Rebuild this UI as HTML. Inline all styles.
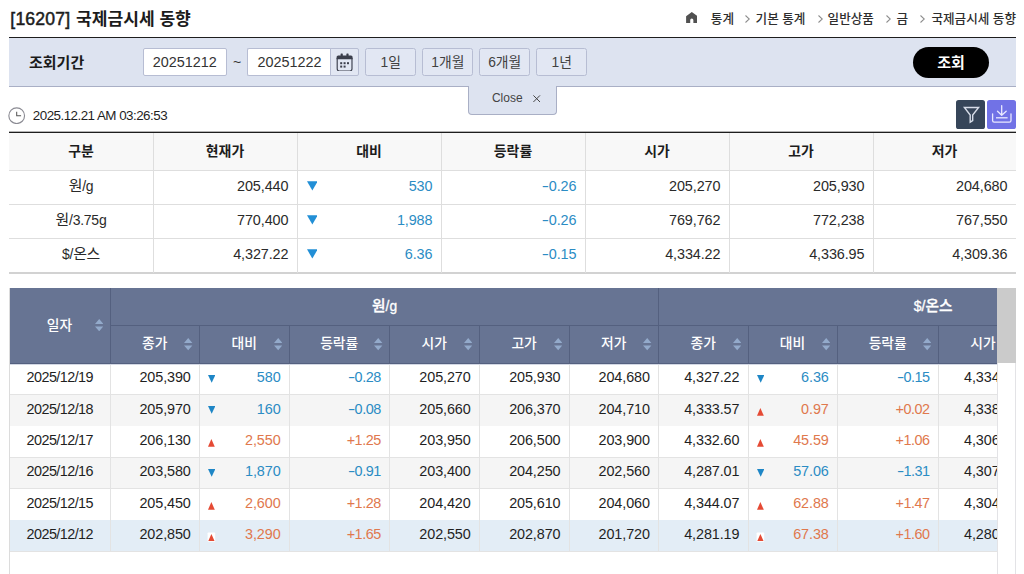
<!DOCTYPE html>
<html lang="ko"><head><meta charset="utf-8"><title>[16207] 국제금시세 동향</title>
<style>
html,body{margin:0;padding:0;background:#fff;}
body{width:1024px;height:574px;overflow:hidden;position:relative;font-family:"Liberation Sans","Noto Sans CJK KR",sans-serif;font-size:13px;color:#222;}
body div,body>svg,.clip>svg{position:absolute;white-space:nowrap;}
i.mn{font-style:normal;display:inline-block;transform:scaleX(1.5);margin:0 1.2px 0 1.4px;}
.kb{font-weight:700;}
.km{font-weight:500;}
.kr{font-weight:400;}
</style></head><body>
<div style="left:10.3px;top:8.3px;width:400px;height:22px;line-height:22px;font-size:17.6px;color:#1c1c1c;"><span style="-webkit-text-stroke:0.5px #1c1c1c;letter-spacing:0.2px">[16207]</span><span class="kb" style="margin-left:5.6px;font-size:17.1px;">국제금시세 동향</span></div>
<svg style="left:685.6px;top:12.4px;width:11.6px;height:11px" viewBox="0 0 116 112"><path fill="#515151" d="M58 0 L116 42 V112 H74 V82 Q74 66 58 66 Q42 66 42 82 V112 H0 V42 Z"/></svg>
<div style="left:710.8px;top:8px;width:200px;height:22px;line-height:22px;font-size:12.6px;color:#2e2e2e;"><span class="km">통계</span></div>
<svg style="left:744.5px;top:14.8px;width:5px;height:8px" viewBox="0 0 5 8"><path d="M0.5 0.5 L4.3 4 L0.5 7.5" fill="none" stroke="#8c8c8c" stroke-width="1.05"/></svg>
<div style="left:755.6px;top:8px;width:200px;height:22px;line-height:22px;font-size:12.6px;color:#2e2e2e;"><span class="km">기본 통계</span></div>
<svg style="left:817.5px;top:14.8px;width:5px;height:8px" viewBox="0 0 5 8"><path d="M0.5 0.5 L4.3 4 L0.5 7.5" fill="none" stroke="#8c8c8c" stroke-width="1.05"/></svg>
<div style="left:827.6px;top:8px;width:200px;height:22px;line-height:22px;font-size:12.6px;color:#2e2e2e;"><span class="km">일반상품</span></div>
<svg style="left:886px;top:14.8px;width:5px;height:8px" viewBox="0 0 5 8"><path d="M0.5 0.5 L4.3 4 L0.5 7.5" fill="none" stroke="#8c8c8c" stroke-width="1.05"/></svg>
<div style="left:896.6px;top:8px;width:200px;height:22px;line-height:22px;font-size:12.6px;color:#2e2e2e;"><span class="km">금</span></div>
<svg style="left:920.3px;top:14.8px;width:5px;height:8px" viewBox="0 0 5 8"><path d="M0.5 0.5 L4.3 4 L0.5 7.5" fill="none" stroke="#8c8c8c" stroke-width="1.05"/></svg>
<div style="left:931.4px;top:8px;width:200px;height:22px;line-height:22px;font-size:12.6px;color:#2e2e2e;"><span class="km">국제금시세 동향</span></div>
<div style="left:9px;top:36.5px;width:1007px;height:50px;background:#dde3f0;border-top:1px solid #1e1e1e;border-bottom:1px solid #a9afc5;box-sizing:border-box;"></div>
<div style="left:29px;top:49.4px;width:80px;height:28px;line-height:28px;font-size:15px;color:#1a1a1a;"><span class="kb">조회기간</span></div>
<div style="left:143px;top:48px;width:83.5px;height:28px;line-height:28px;background:#fff;border:1px solid #b7bdd3;box-sizing:border-box;text-align:center;font-size:14.4px;color:#333;border-radius:2px;line-height:27px;">20251212</div>
<div style="left:229px;top:48px;width:16px;height:28px;line-height:28px;text-align:center;font-size:14px;color:#333;">~</div>
<div style="left:247px;top:48px;width:84px;height:28px;line-height:28px;background:#fff;border:1px solid #b7bdd3;border-right:none;box-sizing:border-box;text-align:center;font-size:14.4px;color:#333;border-radius:2px 0 0 2px;line-height:27px;">20251222</div>
<div style="left:330.3px;top:48px;width:28.4px;height:28px;background:#e2e7f3;border:1px solid #b7bdd3;box-sizing:border-box;border-radius:0 2px 2px 0;"></div>
<svg style="left:336.4px;top:52.6px;width:17.2px;height:18.8px" viewBox="0 0 172 188">
<g fill="#3b3f4c"><rect x="46" y="4" width="22" height="40" rx="6"/><rect x="104" y="4" width="22" height="40" rx="6"/>
<path d="M22 24 H150 Q166 24 166 40 V62 H6 V40 Q6 24 22 24Z"/>
<rect x="42" y="92" width="20" height="20"/><rect x="76" y="92" width="20" height="20"/><rect x="110" y="92" width="20" height="20"/>
<rect x="42" y="126" width="20" height="20"/><rect x="76" y="126" width="20" height="20"/></g>
<path d="M12 50 V158 Q12 180 34 180 H138 Q160 180 160 158 V50" fill="none" stroke="#3b3f4c" stroke-width="11.5"/></svg>
<div style="left:365.2px;top:48px;width:51px;height:28px;line-height:28px;background:#e2e7f3;border:1px solid #b7bdd3;box-sizing:border-box;border-radius:2.5px;text-align:center;font-size:13.8px;color:#404040;line-height:28px;">1<span class="kr">일</span></div>
<div style="left:422.4px;top:48px;width:51px;height:28px;line-height:28px;background:#e2e7f3;border:1px solid #b7bdd3;box-sizing:border-box;border-radius:2.5px;text-align:center;font-size:13.8px;color:#404040;line-height:28px;">1<span class="kr">개월</span></div>
<div style="left:479.2px;top:48px;width:51px;height:28px;line-height:28px;background:#e2e7f3;border:1px solid #b7bdd3;box-sizing:border-box;border-radius:2.5px;text-align:center;font-size:13.8px;color:#404040;line-height:28px;">6<span class="kr">개월</span></div>
<div style="left:536.3px;top:48px;width:51px;height:28px;line-height:28px;background:#e2e7f3;border:1px solid #b7bdd3;box-sizing:border-box;border-radius:2.5px;text-align:center;font-size:13.8px;color:#404040;line-height:28px;">1<span class="kr">년</span></div>
<div style="left:912.6px;top:47px;width:76.8px;height:31.4px;line-height:31.4px;background:#000;border-radius:16px;text-align:center;color:#fff;font-size:15px;"><span class="kb">조회</span></div>
<div style="left:468.3px;top:85.6px;width:89.1px;height:29.8px;line-height:29.8px;background:#dde3f0;border:1px solid #a9afc5;border-top:none;box-sizing:border-box;border-radius:0 0 4px 4px;text-align:left;padding-left:22.6px;font-size:12px;color:#444;line-height:25px;">Close</div>
<svg style="left:533.2px;top:94.6px;width:7.4px;height:7.4px" viewBox="0 0 7.4 7.4"><path d="M0.4 0.4L7 7M7 0.4L0.4 7" stroke="#444" stroke-width="1" fill="none"/></svg>
<svg style="left:8.2px;top:106.8px;width:17.4px;height:17.4px" viewBox="0 0 186 186">
<circle cx="93" cy="93" r="84" fill="#fff" stroke="#8b8b93" stroke-width="12"/>
<path d="M93 52 V93 H140" fill="none" stroke="#555" stroke-width="11"/></svg>
<div style="left:32.8px;top:105px;width:200px;height:22px;line-height:22px;font-size:13.4px;letter-spacing:-0.53px;color:#1f1f1f;">2025.12.21 AM 03:26:53</div>
<div style="left:955.9px;top:99.6px;width:28.9px;height:29px;background:#364559;border-radius:2.6px;"></div>
<svg style="left:955.9px;top:99.6px;width:28.9px;height:29px" viewBox="0 0 289 290">
<path d="M84 75 H226 L167 150 V205 L142 221 V150 Z" fill="none" stroke="#d6dce8" stroke-width="14" stroke-linejoin="miter"/></svg>
<div style="left:987.1px;top:99.6px;width:28.9px;height:29px;background:#7172e6;border-radius:2.6px;"></div>
<svg style="left:987.1px;top:99.6px;width:28.9px;height:29px" viewBox="0 0 289 290">
<g fill="none" stroke="#e9e9ff" stroke-width="13" stroke-linecap="round" stroke-linejoin="round">
<path d="M147 56 V150 M105 112 L147 152 L192 112"/><path d="M90 178 H206" stroke-linecap="butt"/>
<path d="M56 138 V206 Q56 222 72 222 H224 Q240 222 240 206 V138"/></g></svg>
<div style="left:9px;top:132.5px;width:1007px;height:38.2px;background:#f8f8f8;"></div>
<div style="left:9px;top:131px;width:1007px;height:1px;background:#b4b4b4;"></div>
<div style="left:9px;top:132px;width:1007px;height:1px;background:#1e1e1e;"></div>
<div style="left:9px;top:170.2px;width:1007px;height:1px;background:#dedede;"></div>
<div style="left:9px;top:204.1px;width:1007px;height:1px;background:#dedede;"></div>
<div style="left:9px;top:238.1px;width:1007px;height:1px;background:#dedede;"></div>
<div style="left:9px;top:271.6px;width:1007px;height:2px;background:#d2d2d2;"></div>
<div style="left:152.5px;top:133.2px;width:1px;height:139.4px;background:#dedede;"></div>
<div style="left:296.5px;top:133.2px;width:1px;height:139.4px;background:#dedede;"></div>
<div style="left:440.5px;top:133.2px;width:1px;height:139.4px;background:#dedede;"></div>
<div style="left:584.5px;top:133.2px;width:1px;height:139.4px;background:#dedede;"></div>
<div style="left:728.5px;top:133.2px;width:1px;height:139.4px;background:#dedede;"></div>
<div style="left:872.5px;top:133.2px;width:1px;height:139.4px;background:#dedede;"></div>
<div style="left:9px;top:131.8px;width:144px;height:38.2px;line-height:38.2px;text-align:center;font-size:13.9px;color:#1c1c1c;"><span class="kb">구분</span></div>
<div style="left:153px;top:131.8px;width:144px;height:38.2px;line-height:38.2px;text-align:center;font-size:13.9px;color:#1c1c1c;"><span class="kb">현재가</span></div>
<div style="left:297px;top:131.8px;width:144px;height:38.2px;line-height:38.2px;text-align:center;font-size:13.9px;color:#1c1c1c;"><span class="kb">대비</span></div>
<div style="left:441px;top:131.8px;width:144px;height:38.2px;line-height:38.2px;text-align:center;font-size:13.9px;color:#1c1c1c;"><span class="kb">등락률</span></div>
<div style="left:585px;top:131.8px;width:144px;height:38.2px;line-height:38.2px;text-align:center;font-size:13.9px;color:#1c1c1c;"><span class="kb">시가</span></div>
<div style="left:729px;top:131.8px;width:144px;height:38.2px;line-height:38.2px;text-align:center;font-size:13.9px;color:#1c1c1c;"><span class="kb">고가</span></div>
<div style="left:873px;top:131.8px;width:143px;height:38.2px;line-height:38.2px;text-align:center;font-size:13.9px;color:#1c1c1c;"><span class="kb">저가</span></div>
<div style="left:9px;top:169.5px;width:144px;height:33.9px;line-height:33.9px;text-align:center;font-size:14.4px;letter-spacing:-0.1px;color:#2a2a2a;font-size:14px;letter-spacing:-0.25px"><span class="kr" style="font-size:14.9px;">원</span>/g</div>
<div style="left:153px;top:169.5px;width:135.4px;height:33.9px;line-height:33.9px;text-align:right;font-size:14.4px;letter-spacing:-0.1px;color:#2a2a2a;">205,440</div>
<div style="left:297px;top:169.5px;width:135.4px;height:33.9px;line-height:33.9px;text-align:right;font-size:14.4px;letter-spacing:-0.1px;color:#2b8cc4;">530</div>
<svg style="left:306.5px;top:181.45px;width:10.7px;height:9.9px" viewBox="0 0 12 10.4"><path d="M0 0H12L6 10.4Z" fill="#228fd6"/></svg>
<div style="left:441px;top:169.5px;width:135.4px;height:33.9px;line-height:33.9px;text-align:right;font-size:14.4px;letter-spacing:-0.1px;color:#2b8cc4;"><i class="mn">-</i>0.26</div>
<div style="left:585px;top:169.5px;width:135.4px;height:33.9px;line-height:33.9px;text-align:right;font-size:14.4px;letter-spacing:-0.1px;color:#2a2a2a;">205,270</div>
<div style="left:729px;top:169.5px;width:135.4px;height:33.9px;line-height:33.9px;text-align:right;font-size:14.4px;letter-spacing:-0.1px;color:#2a2a2a;">205,930</div>
<div style="left:873px;top:169.5px;width:134.4px;height:33.9px;line-height:33.9px;text-align:right;font-size:14.4px;letter-spacing:-0.1px;color:#2a2a2a;">204,680</div>
<div style="left:9px;top:203.4px;width:144px;height:34px;line-height:34px;text-align:center;font-size:14.4px;letter-spacing:-0.1px;color:#2a2a2a;font-size:14px;letter-spacing:-0.25px"><span class="kr" style="font-size:14.9px;">원</span>/3.75g</div>
<div style="left:153px;top:203.4px;width:135.4px;height:34px;line-height:34px;text-align:right;font-size:14.4px;letter-spacing:-0.1px;color:#2a2a2a;">770,400</div>
<div style="left:297px;top:203.4px;width:135.4px;height:34px;line-height:34px;text-align:right;font-size:14.4px;letter-spacing:-0.1px;color:#2b8cc4;">1,988</div>
<svg style="left:306.5px;top:215.4px;width:10.7px;height:9.9px" viewBox="0 0 12 10.4"><path d="M0 0H12L6 10.4Z" fill="#228fd6"/></svg>
<div style="left:441px;top:203.4px;width:135.4px;height:34px;line-height:34px;text-align:right;font-size:14.4px;letter-spacing:-0.1px;color:#2b8cc4;"><i class="mn">-</i>0.26</div>
<div style="left:585px;top:203.4px;width:135.4px;height:34px;line-height:34px;text-align:right;font-size:14.4px;letter-spacing:-0.1px;color:#2a2a2a;">769,762</div>
<div style="left:729px;top:203.4px;width:135.4px;height:34px;line-height:34px;text-align:right;font-size:14.4px;letter-spacing:-0.1px;color:#2a2a2a;">772,238</div>
<div style="left:873px;top:203.4px;width:134.4px;height:34px;line-height:34px;text-align:right;font-size:14.4px;letter-spacing:-0.1px;color:#2a2a2a;">767,550</div>
<div style="left:9px;top:237.4px;width:144px;height:34px;line-height:34px;text-align:center;font-size:14.4px;letter-spacing:-0.1px;color:#2a2a2a;font-size:14px;letter-spacing:-0.25px">$/<span class="kr" style="font-size:14.9px;">온스</span></div>
<div style="left:153px;top:237.4px;width:135.4px;height:34px;line-height:34px;text-align:right;font-size:14.4px;letter-spacing:-0.1px;color:#2a2a2a;">4,327.22</div>
<div style="left:297px;top:237.4px;width:135.4px;height:34px;line-height:34px;text-align:right;font-size:14.4px;letter-spacing:-0.1px;color:#2b8cc4;">6.36</div>
<svg style="left:306.5px;top:249.4px;width:10.7px;height:9.9px" viewBox="0 0 12 10.4"><path d="M0 0H12L6 10.4Z" fill="#228fd6"/></svg>
<div style="left:441px;top:237.4px;width:135.4px;height:34px;line-height:34px;text-align:right;font-size:14.4px;letter-spacing:-0.1px;color:#2b8cc4;"><i class="mn">-</i>0.15</div>
<div style="left:585px;top:237.4px;width:135.4px;height:34px;line-height:34px;text-align:right;font-size:14.4px;letter-spacing:-0.1px;color:#2a2a2a;">4,334.22</div>
<div style="left:729px;top:237.4px;width:135.4px;height:34px;line-height:34px;text-align:right;font-size:14.4px;letter-spacing:-0.1px;color:#2a2a2a;">4,336.95</div>
<div style="left:873px;top:237.4px;width:134.4px;height:34px;line-height:34px;text-align:right;font-size:14.4px;letter-spacing:-0.1px;color:#2a2a2a;">4,309.36</div>
<div class="clip" style="left:0;top:0;width:997.4px;height:574px;overflow:hidden">
<div style="left:9.8px;top:288.1px;width:1300px;height:75.3px;background:#677493;"></div>
<div style="left:110.4px;top:324.9px;width:1300px;height:1px;background:#54607f;"></div>
<div style="left:109.9px;top:288.1px;width:1px;height:75.3px;background:#54607f;"></div>
<div style="left:658.3px;top:288.1px;width:1px;height:75.3px;background:#54607f;"></div>
<div style="left:199.2px;top:325.4px;width:1px;height:38px;background:#54607f;"></div>
<div style="left:289px;top:325.4px;width:1px;height:38px;background:#54607f;"></div>
<div style="left:389.2px;top:325.4px;width:1px;height:38px;background:#54607f;"></div>
<div style="left:479.1px;top:325.4px;width:1px;height:38px;background:#54607f;"></div>
<div style="left:568.9px;top:325.4px;width:1px;height:38px;background:#54607f;"></div>
<div style="left:747.8px;top:325.4px;width:1px;height:38px;background:#54607f;"></div>
<div style="left:837.1px;top:325.4px;width:1px;height:38px;background:#54607f;"></div>
<div style="left:938.1px;top:325.4px;width:1px;height:38px;background:#54607f;"></div>
<div style="left:1027.7px;top:325.4px;width:1px;height:38px;background:#54607f;"></div>
<div style="left:9.1px;top:287.6px;width:100.6px;height:75.3px;line-height:75.3px;text-align:center;font-size:13.8px;color:#fff;"><span class="km">일자</span></div>
<svg style="left:94.8px;top:318.95px;width:8.4px;height:12.4px" viewBox="0 0 8.4 12.4"><path d="M0 5H8.4L4.2 0.1Z M0 7.4H8.4L4.2 12.3Z" fill="#93aacb"/></svg>
<div style="left:110.4px;top:288.1px;width:548.4px;height:37.3px;line-height:37.3px;text-align:center;font-size:13.8px;color:#fff;-webkit-text-stroke:0.3px #fff;"><span class="km" style="font-size:14.7px;">원</span>/g</div>
<div style="left:658.8px;top:288.1px;width:548.6px;height:37.3px;line-height:37.3px;text-align:center;font-size:13.8px;color:#fff;font-size:14px;-webkit-text-stroke:0.3px #fff;">$/<span class="km" style="font-size:14.7px;">온스</span></div>
<div style="left:110px;top:324.9px;width:89.3px;height:38px;line-height:38px;text-align:center;font-size:13.8px;color:#fff;"><span class="km">종가</span></div>
<svg style="left:184.2px;top:338.2px;width:8.4px;height:12.4px" viewBox="0 0 8.4 12.4"><path d="M0 5H8.4L4.2 0.1Z M0 7.4H8.4L4.2 12.3Z" fill="#93aacb"/></svg>
<div style="left:199.3px;top:324.9px;width:89.8px;height:38px;line-height:38px;text-align:center;font-size:13.8px;color:#fff;"><span class="km">대비</span></div>
<svg style="left:274px;top:338.2px;width:8.4px;height:12.4px" viewBox="0 0 8.4 12.4"><path d="M0 5H8.4L4.2 0.1Z M0 7.4H8.4L4.2 12.3Z" fill="#93aacb"/></svg>
<div style="left:289.1px;top:324.9px;width:100.2px;height:38px;line-height:38px;text-align:center;font-size:13.8px;color:#fff;"><span class="km">등락률</span></div>
<svg style="left:374.2px;top:338.2px;width:8.4px;height:12.4px" viewBox="0 0 8.4 12.4"><path d="M0 5H8.4L4.2 0.1Z M0 7.4H8.4L4.2 12.3Z" fill="#93aacb"/></svg>
<div style="left:389.3px;top:324.9px;width:89.9px;height:38px;line-height:38px;text-align:center;font-size:13.8px;color:#fff;"><span class="km">시가</span></div>
<svg style="left:464.1px;top:338.2px;width:8.4px;height:12.4px" viewBox="0 0 8.4 12.4"><path d="M0 5H8.4L4.2 0.1Z M0 7.4H8.4L4.2 12.3Z" fill="#93aacb"/></svg>
<div style="left:479.2px;top:324.9px;width:89.8px;height:38px;line-height:38px;text-align:center;font-size:13.8px;color:#fff;"><span class="km">고가</span></div>
<svg style="left:553.9px;top:338.2px;width:8.4px;height:12.4px" viewBox="0 0 8.4 12.4"><path d="M0 5H8.4L4.2 0.1Z M0 7.4H8.4L4.2 12.3Z" fill="#93aacb"/></svg>
<div style="left:569px;top:324.9px;width:89.4px;height:38px;line-height:38px;text-align:center;font-size:13.8px;color:#fff;"><span class="km">저가</span></div>
<svg style="left:643.3px;top:338.2px;width:8.4px;height:12.4px" viewBox="0 0 8.4 12.4"><path d="M0 5H8.4L4.2 0.1Z M0 7.4H8.4L4.2 12.3Z" fill="#93aacb"/></svg>
<div style="left:658.4px;top:324.9px;width:89.5px;height:38px;line-height:38px;text-align:center;font-size:13.8px;color:#fff;"><span class="km">종가</span></div>
<svg style="left:732.8px;top:338.2px;width:8.4px;height:12.4px" viewBox="0 0 8.4 12.4"><path d="M0 5H8.4L4.2 0.1Z M0 7.4H8.4L4.2 12.3Z" fill="#93aacb"/></svg>
<div style="left:747.9px;top:324.9px;width:89.3px;height:38px;line-height:38px;text-align:center;font-size:13.8px;color:#fff;"><span class="km">대비</span></div>
<svg style="left:822.1px;top:338.2px;width:8.4px;height:12.4px" viewBox="0 0 8.4 12.4"><path d="M0 5H8.4L4.2 0.1Z M0 7.4H8.4L4.2 12.3Z" fill="#93aacb"/></svg>
<div style="left:837.2px;top:324.9px;width:101px;height:38px;line-height:38px;text-align:center;font-size:13.8px;color:#fff;"><span class="km">등락률</span></div>
<svg style="left:923.1px;top:338.2px;width:8.4px;height:12.4px" viewBox="0 0 8.4 12.4"><path d="M0 5H8.4L4.2 0.1Z M0 7.4H8.4L4.2 12.3Z" fill="#93aacb"/></svg>
<div style="left:938.2px;top:324.9px;width:89.6px;height:38px;line-height:38px;text-align:center;font-size:13.8px;color:#fff;"><span class="km">시가</span></div>
<svg style="left:1012.7px;top:338.2px;width:8.4px;height:12.4px" viewBox="0 0 8.4 12.4"><path d="M0 5H8.4L4.2 0.1Z M0 7.4H8.4L4.2 12.3Z" fill="#93aacb"/></svg>
<div style="left:9.8px;top:363.4px;width:1300px;height:31.37px;background:#fff;"></div>
<div style="left:9.8px;top:394.27px;width:1300px;height:1px;background:#e3e3e3;"></div>
<div style="left:9.5px;top:362.15px;width:100.6px;height:31.37px;line-height:31.37px;text-align:center;font-size:14.4px;letter-spacing:-0.56px;color:#1f1f1f;">2025/12/19</div>
<div style="left:110.4px;top:362.15px;width:80.4px;height:31.37px;line-height:31.37px;text-align:right;font-size:14.4px;letter-spacing:-0.1px;color:#1f1f1f;">205,390</div>
<div style="left:199.7px;top:362.15px;width:80.9px;height:31.37px;line-height:31.37px;text-align:right;font-size:14.4px;letter-spacing:-0.1px;color:#2b8cc4;">580</div>
<svg style="left:207.9px;top:374.785px;width:7.4px;height:7.8px" viewBox="0 0 7.4 7.8"><path d="M0 0H7.4L3.7 7.8Z" fill="#1e86c6"/></svg>
<div style="left:289.5px;top:362.15px;width:91.3px;height:31.37px;line-height:31.37px;text-align:right;font-size:14.4px;letter-spacing:-0.1px;color:#2b8cc4;letter-spacing:-0.45px;"><i class="mn">-</i>0.28</div>
<div style="left:389.7px;top:362.15px;width:81px;height:31.37px;line-height:31.37px;text-align:right;font-size:14.4px;letter-spacing:-0.1px;color:#1f1f1f;">205,270</div>
<div style="left:479.6px;top:362.15px;width:80.9px;height:31.37px;line-height:31.37px;text-align:right;font-size:14.4px;letter-spacing:-0.1px;color:#1f1f1f;">205,930</div>
<div style="left:569.4px;top:362.15px;width:80.5px;height:31.37px;line-height:31.37px;text-align:right;font-size:14.4px;letter-spacing:-0.1px;color:#1f1f1f;">204,680</div>
<div style="left:658.8px;top:362.15px;width:80.6px;height:31.37px;line-height:31.37px;text-align:right;font-size:14.4px;letter-spacing:-0.1px;color:#1f1f1f;">4,327.22</div>
<div style="left:748.3px;top:362.15px;width:80.4px;height:31.37px;line-height:31.37px;text-align:right;font-size:14.4px;letter-spacing:-0.1px;color:#2b8cc4;">6.36</div>
<svg style="left:756.5px;top:374.785px;width:7.4px;height:7.8px" viewBox="0 0 7.4 7.8"><path d="M0 0H7.4L3.7 7.8Z" fill="#1e86c6"/></svg>
<div style="left:837.6px;top:362.15px;width:92.1px;height:31.37px;line-height:31.37px;text-align:right;font-size:14.4px;letter-spacing:-0.1px;color:#2b8cc4;letter-spacing:-0.45px;"><i class="mn">-</i>0.15</div>
<div style="left:938.6px;top:362.15px;width:80.7px;height:31.37px;line-height:31.37px;text-align:right;font-size:14.4px;letter-spacing:-0.1px;color:#1f1f1f;">4,334.22</div>
<div style="left:9.8px;top:394.77px;width:1300px;height:31.37px;background:#f5f5f5;"></div>
<div style="left:9.8px;top:425.64px;width:1300px;height:1px;background:#e3e3e3;"></div>
<div style="left:9.5px;top:393.52px;width:100.6px;height:31.37px;line-height:31.37px;text-align:center;font-size:14.4px;letter-spacing:-0.56px;color:#1f1f1f;">2025/12/18</div>
<div style="left:110.4px;top:393.52px;width:80.4px;height:31.37px;line-height:31.37px;text-align:right;font-size:14.4px;letter-spacing:-0.1px;color:#1f1f1f;">205,970</div>
<div style="left:199.7px;top:393.52px;width:80.9px;height:31.37px;line-height:31.37px;text-align:right;font-size:14.4px;letter-spacing:-0.1px;color:#2b8cc4;">160</div>
<svg style="left:207.9px;top:406.155px;width:7.4px;height:7.8px" viewBox="0 0 7.4 7.8"><path d="M0 0H7.4L3.7 7.8Z" fill="#1e86c6"/></svg>
<div style="left:289.5px;top:393.52px;width:91.3px;height:31.37px;line-height:31.37px;text-align:right;font-size:14.4px;letter-spacing:-0.1px;color:#2b8cc4;letter-spacing:-0.45px;"><i class="mn">-</i>0.08</div>
<div style="left:389.7px;top:393.52px;width:81px;height:31.37px;line-height:31.37px;text-align:right;font-size:14.4px;letter-spacing:-0.1px;color:#1f1f1f;">205,660</div>
<div style="left:479.6px;top:393.52px;width:80.9px;height:31.37px;line-height:31.37px;text-align:right;font-size:14.4px;letter-spacing:-0.1px;color:#1f1f1f;">206,370</div>
<div style="left:569.4px;top:393.52px;width:80.5px;height:31.37px;line-height:31.37px;text-align:right;font-size:14.4px;letter-spacing:-0.1px;color:#1f1f1f;">204,710</div>
<div style="left:658.8px;top:393.52px;width:80.6px;height:31.37px;line-height:31.37px;text-align:right;font-size:14.4px;letter-spacing:-0.1px;color:#1f1f1f;">4,333.57</div>
<div style="left:748.3px;top:393.52px;width:80.4px;height:31.37px;line-height:31.37px;text-align:right;font-size:14.4px;letter-spacing:-0.1px;color:#e0784d;">0.97</div>
<svg style="left:756.8px;top:408.055px;width:6.8px;height:7.7px" viewBox="0 0 7 7.2" preserveAspectRatio="none"><path d="M0 7.2H7L3.5 0Z" fill="#e54a34"/></svg>
<div style="left:837.6px;top:393.52px;width:92.1px;height:31.37px;line-height:31.37px;text-align:right;font-size:14.4px;letter-spacing:-0.1px;color:#e0784d;letter-spacing:-0.45px;">+0.02</div>
<div style="left:938.6px;top:393.52px;width:80.7px;height:31.37px;line-height:31.37px;text-align:right;font-size:14.4px;letter-spacing:-0.1px;color:#1f1f1f;">4,338.31</div>
<div style="left:9.8px;top:426.14px;width:1300px;height:31.37px;background:#fff;"></div>
<div style="left:9.8px;top:457.01px;width:1300px;height:1px;background:#e3e3e3;"></div>
<div style="left:9.5px;top:424.89px;width:100.6px;height:31.37px;line-height:31.37px;text-align:center;font-size:14.4px;letter-spacing:-0.56px;color:#1f1f1f;">2025/12/17</div>
<div style="left:110.4px;top:424.89px;width:80.4px;height:31.37px;line-height:31.37px;text-align:right;font-size:14.4px;letter-spacing:-0.1px;color:#1f1f1f;">206,130</div>
<div style="left:199.7px;top:424.89px;width:80.9px;height:31.37px;line-height:31.37px;text-align:right;font-size:14.4px;letter-spacing:-0.1px;color:#e0784d;">2,550</div>
<svg style="left:208.2px;top:439.425px;width:6.8px;height:7.7px" viewBox="0 0 7 7.2" preserveAspectRatio="none"><path d="M0 7.2H7L3.5 0Z" fill="#e54a34"/></svg>
<div style="left:289.5px;top:424.89px;width:91.3px;height:31.37px;line-height:31.37px;text-align:right;font-size:14.4px;letter-spacing:-0.1px;color:#e0784d;letter-spacing:-0.45px;">+1.25</div>
<div style="left:389.7px;top:424.89px;width:81px;height:31.37px;line-height:31.37px;text-align:right;font-size:14.4px;letter-spacing:-0.1px;color:#1f1f1f;">203,950</div>
<div style="left:479.6px;top:424.89px;width:80.9px;height:31.37px;line-height:31.37px;text-align:right;font-size:14.4px;letter-spacing:-0.1px;color:#1f1f1f;">206,500</div>
<div style="left:569.4px;top:424.89px;width:80.5px;height:31.37px;line-height:31.37px;text-align:right;font-size:14.4px;letter-spacing:-0.1px;color:#1f1f1f;">203,900</div>
<div style="left:658.8px;top:424.89px;width:80.6px;height:31.37px;line-height:31.37px;text-align:right;font-size:14.4px;letter-spacing:-0.1px;color:#1f1f1f;">4,332.60</div>
<div style="left:748.3px;top:424.89px;width:80.4px;height:31.37px;line-height:31.37px;text-align:right;font-size:14.4px;letter-spacing:-0.1px;color:#e0784d;">45.59</div>
<svg style="left:756.8px;top:439.425px;width:6.8px;height:7.7px" viewBox="0 0 7 7.2" preserveAspectRatio="none"><path d="M0 7.2H7L3.5 0Z" fill="#e54a34"/></svg>
<div style="left:837.6px;top:424.89px;width:92.1px;height:31.37px;line-height:31.37px;text-align:right;font-size:14.4px;letter-spacing:-0.1px;color:#e0784d;letter-spacing:-0.45px;">+1.06</div>
<div style="left:938.6px;top:424.89px;width:80.7px;height:31.37px;line-height:31.37px;text-align:right;font-size:14.4px;letter-spacing:-0.1px;color:#1f1f1f;">4,306.01</div>
<div style="left:9.8px;top:457.51px;width:1300px;height:31.37px;background:#f5f5f5;"></div>
<div style="left:9.8px;top:488.38px;width:1300px;height:1px;background:#e3e3e3;"></div>
<div style="left:9.5px;top:456.26px;width:100.6px;height:31.37px;line-height:31.37px;text-align:center;font-size:14.4px;letter-spacing:-0.56px;color:#1f1f1f;">2025/12/16</div>
<div style="left:110.4px;top:456.26px;width:80.4px;height:31.37px;line-height:31.37px;text-align:right;font-size:14.4px;letter-spacing:-0.1px;color:#1f1f1f;">203,580</div>
<div style="left:199.7px;top:456.26px;width:80.9px;height:31.37px;line-height:31.37px;text-align:right;font-size:14.4px;letter-spacing:-0.1px;color:#2b8cc4;">1,870</div>
<svg style="left:207.9px;top:468.895px;width:7.4px;height:7.8px" viewBox="0 0 7.4 7.8"><path d="M0 0H7.4L3.7 7.8Z" fill="#1e86c6"/></svg>
<div style="left:289.5px;top:456.26px;width:91.3px;height:31.37px;line-height:31.37px;text-align:right;font-size:14.4px;letter-spacing:-0.1px;color:#2b8cc4;letter-spacing:-0.45px;"><i class="mn">-</i>0.91</div>
<div style="left:389.7px;top:456.26px;width:81px;height:31.37px;line-height:31.37px;text-align:right;font-size:14.4px;letter-spacing:-0.1px;color:#1f1f1f;">203,400</div>
<div style="left:479.6px;top:456.26px;width:80.9px;height:31.37px;line-height:31.37px;text-align:right;font-size:14.4px;letter-spacing:-0.1px;color:#1f1f1f;">204,250</div>
<div style="left:569.4px;top:456.26px;width:80.5px;height:31.37px;line-height:31.37px;text-align:right;font-size:14.4px;letter-spacing:-0.1px;color:#1f1f1f;">202,560</div>
<div style="left:658.8px;top:456.26px;width:80.6px;height:31.37px;line-height:31.37px;text-align:right;font-size:14.4px;letter-spacing:-0.1px;color:#1f1f1f;">4,287.01</div>
<div style="left:748.3px;top:456.26px;width:80.4px;height:31.37px;line-height:31.37px;text-align:right;font-size:14.4px;letter-spacing:-0.1px;color:#2b8cc4;">57.06</div>
<svg style="left:756.5px;top:468.895px;width:7.4px;height:7.8px" viewBox="0 0 7.4 7.8"><path d="M0 0H7.4L3.7 7.8Z" fill="#1e86c6"/></svg>
<div style="left:837.6px;top:456.26px;width:92.1px;height:31.37px;line-height:31.37px;text-align:right;font-size:14.4px;letter-spacing:-0.1px;color:#2b8cc4;letter-spacing:-0.45px;"><i class="mn">-</i>1.31</div>
<div style="left:938.6px;top:456.26px;width:80.7px;height:31.37px;line-height:31.37px;text-align:right;font-size:14.4px;letter-spacing:-0.1px;color:#1f1f1f;">4,307.68</div>
<div style="left:9.8px;top:488.88px;width:1300px;height:31.37px;background:#fff;"></div>
<div style="left:9.8px;top:519.75px;width:1300px;height:1px;background:#e3e3e3;"></div>
<div style="left:9.5px;top:487.63px;width:100.6px;height:31.37px;line-height:31.37px;text-align:center;font-size:14.4px;letter-spacing:-0.56px;color:#1f1f1f;">2025/12/15</div>
<div style="left:110.4px;top:487.63px;width:80.4px;height:31.37px;line-height:31.37px;text-align:right;font-size:14.4px;letter-spacing:-0.1px;color:#1f1f1f;">205,450</div>
<div style="left:199.7px;top:487.63px;width:80.9px;height:31.37px;line-height:31.37px;text-align:right;font-size:14.4px;letter-spacing:-0.1px;color:#e0784d;">2,600</div>
<svg style="left:208.2px;top:502.165px;width:6.8px;height:7.7px" viewBox="0 0 7 7.2" preserveAspectRatio="none"><path d="M0 7.2H7L3.5 0Z" fill="#e54a34"/></svg>
<div style="left:289.5px;top:487.63px;width:91.3px;height:31.37px;line-height:31.37px;text-align:right;font-size:14.4px;letter-spacing:-0.1px;color:#e0784d;letter-spacing:-0.45px;">+1.28</div>
<div style="left:389.7px;top:487.63px;width:81px;height:31.37px;line-height:31.37px;text-align:right;font-size:14.4px;letter-spacing:-0.1px;color:#1f1f1f;">204,420</div>
<div style="left:479.6px;top:487.63px;width:80.9px;height:31.37px;line-height:31.37px;text-align:right;font-size:14.4px;letter-spacing:-0.1px;color:#1f1f1f;">205,610</div>
<div style="left:569.4px;top:487.63px;width:80.5px;height:31.37px;line-height:31.37px;text-align:right;font-size:14.4px;letter-spacing:-0.1px;color:#1f1f1f;">204,060</div>
<div style="left:658.8px;top:487.63px;width:80.6px;height:31.37px;line-height:31.37px;text-align:right;font-size:14.4px;letter-spacing:-0.1px;color:#1f1f1f;">4,344.07</div>
<div style="left:748.3px;top:487.63px;width:80.4px;height:31.37px;line-height:31.37px;text-align:right;font-size:14.4px;letter-spacing:-0.1px;color:#e0784d;">62.88</div>
<svg style="left:756.8px;top:502.165px;width:6.8px;height:7.7px" viewBox="0 0 7 7.2" preserveAspectRatio="none"><path d="M0 7.2H7L3.5 0Z" fill="#e54a34"/></svg>
<div style="left:837.6px;top:487.63px;width:92.1px;height:31.37px;line-height:31.37px;text-align:right;font-size:14.4px;letter-spacing:-0.1px;color:#e0784d;letter-spacing:-0.45px;">+1.47</div>
<div style="left:938.6px;top:487.63px;width:80.7px;height:31.37px;line-height:31.37px;text-align:right;font-size:14.4px;letter-spacing:-0.1px;color:#1f1f1f;">4,304.54</div>
<div style="left:9.8px;top:520.25px;width:1300px;height:31.37px;background:#e3edf6;"></div>
<div style="left:9.8px;top:551.12px;width:1300px;height:1px;background:#e3e3e3;"></div>
<div style="left:9.5px;top:519px;width:100.6px;height:31.37px;line-height:31.37px;text-align:center;font-size:14.4px;letter-spacing:-0.56px;color:#1f1f1f;">2025/12/12</div>
<div style="left:110.4px;top:519px;width:80.4px;height:31.37px;line-height:31.37px;text-align:right;font-size:14.4px;letter-spacing:-0.1px;color:#1f1f1f;">202,850</div>
<div style="left:199.7px;top:519px;width:80.9px;height:31.37px;line-height:31.37px;text-align:right;font-size:14.4px;letter-spacing:-0.1px;color:#e0784d;">3,290</div>
<svg style="left:207.2px;top:531.535px;width:8.8px;height:10.2px" viewBox="0 0 8.8 10.2"><rect x="0.6" y="0.5" width="7.6" height="9.2" rx="0.8" fill="#fff"/></svg>
<svg style="left:208.2px;top:533.535px;width:6.8px;height:7.7px" viewBox="0 0 7 7.2" preserveAspectRatio="none"><path d="M0 7.2H7L3.5 0Z" fill="#e54a34"/></svg>
<div style="left:289.5px;top:519px;width:91.3px;height:31.37px;line-height:31.37px;text-align:right;font-size:14.4px;letter-spacing:-0.1px;color:#e0784d;letter-spacing:-0.45px;">+1.65</div>
<div style="left:389.7px;top:519px;width:81px;height:31.37px;line-height:31.37px;text-align:right;font-size:14.4px;letter-spacing:-0.1px;color:#1f1f1f;">202,550</div>
<div style="left:479.6px;top:519px;width:80.9px;height:31.37px;line-height:31.37px;text-align:right;font-size:14.4px;letter-spacing:-0.1px;color:#1f1f1f;">202,870</div>
<div style="left:569.4px;top:519px;width:80.5px;height:31.37px;line-height:31.37px;text-align:right;font-size:14.4px;letter-spacing:-0.1px;color:#1f1f1f;">201,720</div>
<div style="left:658.8px;top:519px;width:80.6px;height:31.37px;line-height:31.37px;text-align:right;font-size:14.4px;letter-spacing:-0.1px;color:#1f1f1f;">4,281.19</div>
<div style="left:748.3px;top:519px;width:80.4px;height:31.37px;line-height:31.37px;text-align:right;font-size:14.4px;letter-spacing:-0.1px;color:#e0784d;">67.38</div>
<svg style="left:755.8px;top:531.535px;width:8.8px;height:10.2px" viewBox="0 0 8.8 10.2"><rect x="0.6" y="0.5" width="7.6" height="9.2" rx="0.8" fill="#fff"/></svg>
<svg style="left:756.8px;top:533.535px;width:6.8px;height:7.7px" viewBox="0 0 7 7.2" preserveAspectRatio="none"><path d="M0 7.2H7L3.5 0Z" fill="#e54a34"/></svg>
<div style="left:837.6px;top:519px;width:92.1px;height:31.37px;line-height:31.37px;text-align:right;font-size:14.4px;letter-spacing:-0.1px;color:#e0784d;letter-spacing:-0.45px;">+1.60</div>
<div style="left:938.6px;top:519px;width:80.7px;height:31.37px;line-height:31.37px;text-align:right;font-size:14.4px;letter-spacing:-0.1px;color:#1f1f1f;">4,280.12</div>
<div style="left:109.9px;top:363.4px;width:1px;height:188.22px;background:#e3e3e3;"></div>
<div style="left:199.2px;top:363.4px;width:1px;height:188.22px;background:#e3e3e3;"></div>
<div style="left:289px;top:363.4px;width:1px;height:188.22px;background:#e3e3e3;"></div>
<div style="left:389.2px;top:363.4px;width:1px;height:188.22px;background:#e3e3e3;"></div>
<div style="left:479.1px;top:363.4px;width:1px;height:188.22px;background:#e3e3e3;"></div>
<div style="left:568.9px;top:363.4px;width:1px;height:188.22px;background:#e3e3e3;"></div>
<div style="left:658.3px;top:363.4px;width:1px;height:188.22px;background:#e3e3e3;"></div>
<div style="left:747.8px;top:363.4px;width:1px;height:188.22px;background:#e3e3e3;"></div>
<div style="left:837.1px;top:363.4px;width:1px;height:188.22px;background:#e3e3e3;"></div>
<div style="left:938.1px;top:363.4px;width:1px;height:188.22px;background:#e3e3e3;"></div>
<div style="left:1027.7px;top:363.4px;width:1px;height:188.22px;background:#e3e3e3;"></div>
<div style="left:9.8px;top:363px;width:1300px;height:1px;background:#54607f;"></div>
<div style="left:9.8px;top:364px;width:1300px;height:1px;background:#d3d8e4;"></div>
</div>
<div style="left:9.2px;top:288.1px;width:1px;height:285.9px;background:#dcdcdc;"></div>
<div style="left:997.4px;top:288.1px;width:18.2px;height:75.3px;background:#cbcbcb;"></div>
<div style="left:997.1px;top:363.4px;width:1px;height:210.6px;background:#e3e3e6;"></div>
<div style="left:1014.8px;top:363.4px;width:1px;height:210.6px;background:#e3e3e6;"></div>
</body></html>
